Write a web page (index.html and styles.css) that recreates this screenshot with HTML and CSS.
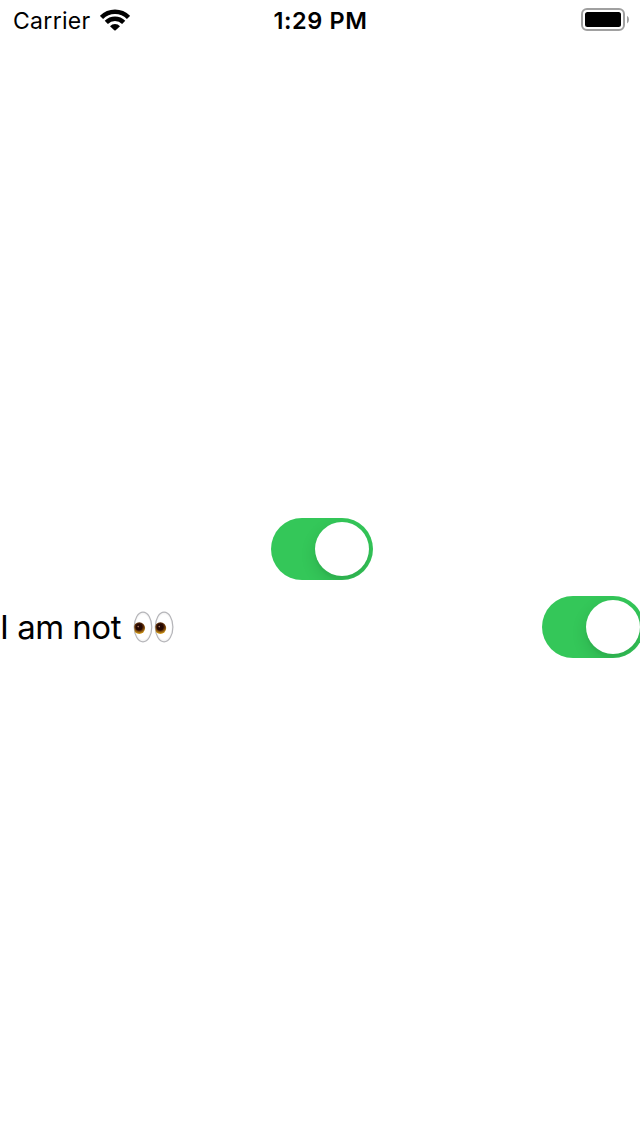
FILE: index.html
```html
<!DOCTYPE html>
<html lang="en">
<head>
<meta charset="utf-8">
<title>Toggles</title>
<link rel="stylesheet" href="styles.css">
</head>
<body>
<header class="status-bar">
  <div class="carrier"><span class="carrier-name">Carrier</span>
    <svg class="wifi" width="30" height="22" viewBox="0 0 30 22"><g fill="none" stroke="#000" stroke-width="4.5"><path d="M1.5 8.4A19.2 19.2 0 0 1 28.5 8.4"/><path d="M6.3 13.4A12.3 12.3 0 0 1 23.7 13.4"/></g><path d="M14.3 21.2L10 17.2A7 7 0 0 1 20 17.2L15.7 21.2Q15 21.8 14.3 21.2Z"/></svg>
  </div>
  <div class="time">1:29 PM</div>
  <svg class="battery" width="49" height="24" viewBox="0 0 49 24"><rect x="1" y="1" width="42" height="21" rx="5" fill="none" stroke="#a0a0a0" stroke-width="2"/><rect x="4" y="4" width="36" height="15" rx="2.5"/><path d="M46 7.8q2 1.2 2 3.8t-2 3.8z" fill="#a0a0a0"/></svg>
</header>
<main class="content">
  <div class="switch centered"><span class="knob"></span></div>
  <div class="row">
    <span class="label">I am not</span>
    <svg class="eyes" width="42" height="34" viewBox="0 0 42 34">
      <defs>
        <radialGradient id="iris" cx=".5" cy=".35" r=".65"><stop offset=".3" stop-color="#2b0b03"/><stop offset=".6" stop-color="#68360a"/><stop offset="1" stop-color="#dfa51b"/></radialGradient>
        <radialGradient id="white"><stop offset=".8" stop-color="#fff"/><stop offset="1" stop-color="#eee"/></radialGradient>
        <clipPath id="left"><ellipse cx="10" cy="17" rx="8.8" ry="14.8"/></clipPath>
        <clipPath id="right"><ellipse cx="31.1" cy="17" rx="8.8" ry="14.8"/></clipPath>
      </defs>
      <g fill="url(#white)" stroke="#b5b5b9" stroke-width="1.2"><ellipse cx="10" cy="17" rx="8.8" ry="14.9"/><ellipse cx="31.1" cy="17" rx="8.8" ry="14.9"/></g>
      <g clip-path="url(#left)"><circle cx="6.3" cy="18.1" r="5.8" fill="url(#iris)"/><circle cx="6" cy="17.3" r="3.3" fill="#260902"/><circle cx="5.2" cy="16.6" r=".8" fill="#a87862"/></g>
      <g clip-path="url(#right)"><circle cx="27.4" cy="18.1" r="5.8" fill="url(#iris)"/><circle cx="27.1" cy="17.3" r="3.3" fill="#260902"/><circle cx="26.3" cy="16.6" r=".8" fill="#a87862"/></g>
    </svg>
    <div class="switch"><span class="knob"></span></div>
  </div>
</main>
</body>
</html>
```
FILE: styles.css
```css
body { margin: 0; width: 640px; height: 1136px; overflow: hidden; background: #fff; color: #000; font-family: Inter, sans-serif; }
.status-bar { height: 40px; display: grid; grid-template-columns: 1fr auto 1fr; align-items: center; }
.carrier { display: flex; align-items: center; gap: 9px; padding-left: 13px; font-size: 23px; letter-spacing: .3px; }
.carrier-name { padding-top: 2px; }
.time { padding: 0 0 0 1px; font-size: 23.5px; font-weight: 560; letter-spacing: .6px; }
.battery { justify-self: end; margin-right: 10px; }
.content { padding-top: 478px; display: flex; flex-direction: column; gap: 16px; }
.switch { box-sizing: border-box; width: 102px; height: 62px; padding: 4px; border-radius: 31px; background: #34c759; display: flex; justify-content: flex-end; flex: none; overflow: hidden; }
.centered { margin-left: 271px; }
.knob { width: 54px; height: 54px; border-radius: 50%; background: #fff; box-shadow: 0 6px 16px rgba(0,0,0,.12), 0 4px 2px rgba(0,0,0,.03); }
.row { display: flex; align-items: center; height: 62px; }
.label { flex: none; box-sizing: border-box; width: 133px; font-size: 33px; letter-spacing: -.5px; white-space: nowrap; }
.eyes { margin-right: 367px; flex: none; }
```
